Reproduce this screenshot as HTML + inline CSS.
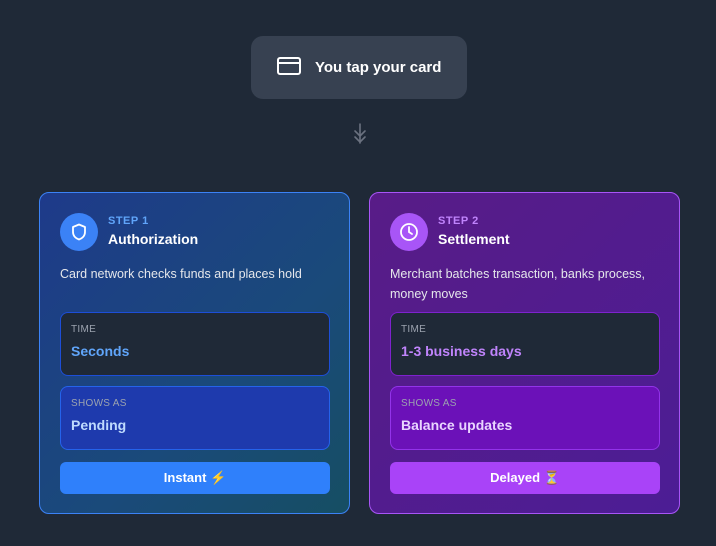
<!DOCTYPE html>
<html><head><style>
*{margin:0;padding:0;box-sizing:border-box}
body{width:716px;height:546px;background:#1f2937;font-family:"Liberation Sans",sans-serif;position:relative;overflow:hidden}
.top{position:absolute;left:251px;top:36px;width:216px;height:63px;background:#374151;border-radius:12px;color:#fff;font-weight:bold;font-size:15px}
.top svg{position:absolute;left:26px;top:21px}
.top span{position:absolute;left:64px;top:23px}
.arrow{position:absolute;left:352px;top:123px}
.card{position:absolute;top:192px;width:311px;height:322px;border-radius:10px;border:1px solid}
.c1{left:39px;border-color:#3b82f6;background:linear-gradient(135deg,#1e3a8a 0%,#1a4a7a 60%,#164e63 100%)}
.c2{left:369px;border-color:#a855f7;background:linear-gradient(135deg,#581c87 0%,#4c1d95 100%)}
.ic{position:absolute;left:20px;top:20px;width:38px;height:38px;border-radius:50%;display:flex;align-items:center;justify-content:center}
.step{position:absolute;left:68px;top:22px;font-size:11px;font-weight:bold;letter-spacing:.5px}
.title{position:absolute;left:68px;top:38px;font-size:14px;font-weight:bold;color:#fff}
.desc{position:absolute;left:20px;top:71px;width:280px;font-size:12.5px;line-height:20px;color:#e5e7eb}
.box{position:absolute;left:20px;width:270px;height:64px;border-radius:8px;border:1px solid}
.box .l{position:absolute;left:10px;top:11px;font-size:10px;color:#9ca3af;letter-spacing:.3px}
.box .v{position:absolute;left:10px;top:30px;font-size:14px;font-weight:bold}
.btn{position:absolute;left:20px;top:269px;width:270px;height:32px;border-radius:6px;color:#fff;font-weight:bold;font-size:13px;text-align:center;line-height:32px}
</style></head><body>
<div class="top"><svg width="24" height="18" viewBox="0 0 24 18" fill="none" stroke="#fff" stroke-width="2"><rect x="1" y="1" width="22" height="16" rx="2"/><line x1="1" y1="6" x2="23" y2="6"/></svg><span>You tap your card</span></div>
<svg class="arrow" width="16" height="22" viewBox="0 0 16 22" fill="none" stroke="#6b7280" stroke-width="1.6" stroke-linecap="round"><line x1="8" y1="1" x2="8" y2="20"/><polyline points="3,8 8,13 13,8"/><polyline points="3,14 8,19 13,14"/></svg>
<div class="card c1">
<div class="ic" style="background:#3b82f6"><svg width="16" height="18" viewBox="0 0 16 18" fill="none" stroke="#fff" stroke-width="1.8" stroke-linejoin="round"><path d="M8 1.5L14 4v5c0 4-3 6.5-6 7.5C5 15.5 2 13 2 9V4z"/></svg></div>
<div class="step" style="color:#60a5fa">STEP 1</div><div class="title">Authorization</div>
<div class="desc">Card network checks funds and places hold</div>
<div class="box" style="top:119px;background:#1f2937;border-color:#1d4ed8"><div class="l">TIME</div><div class="v" style="color:#60a5fa">Seconds</div></div>
<div class="box" style="top:193px;background:#1e3aad;border-color:#2563eb"><div class="l">SHOWS AS</div><div class="v" style="color:#bfdbfe">Pending</div></div>
<div class="btn" style="background:#2f80fb">Instant ⚡</div>
</div>
<div class="card c2">
<div class="ic" style="background:#a855f7"><svg width="20" height="20" viewBox="0 0 20 20" fill="none" stroke="#fff" stroke-width="1.8" stroke-linecap="round"><circle cx="10" cy="10" r="8"/><polyline points="10,5 10,10 13,12"/></svg></div>
<div class="step" style="color:#c084fc">STEP 2</div><div class="title">Settlement</div>
<div class="desc">Merchant batches transaction, banks process, money moves</div>
<div class="box" style="top:119px;background:#1f2937;border-color:#7e22ce"><div class="l">TIME</div><div class="v" style="color:#c084fc">1-3 business days</div></div>
<div class="box" style="top:193px;background:#6b11b8;border-color:#9333ea"><div class="l">SHOWS AS</div><div class="v" style="color:#e9d5ff">Balance updates</div></div>
<div class="btn" style="background:#a943f8">Delayed ⏳</div>
</div>
</body></html>
